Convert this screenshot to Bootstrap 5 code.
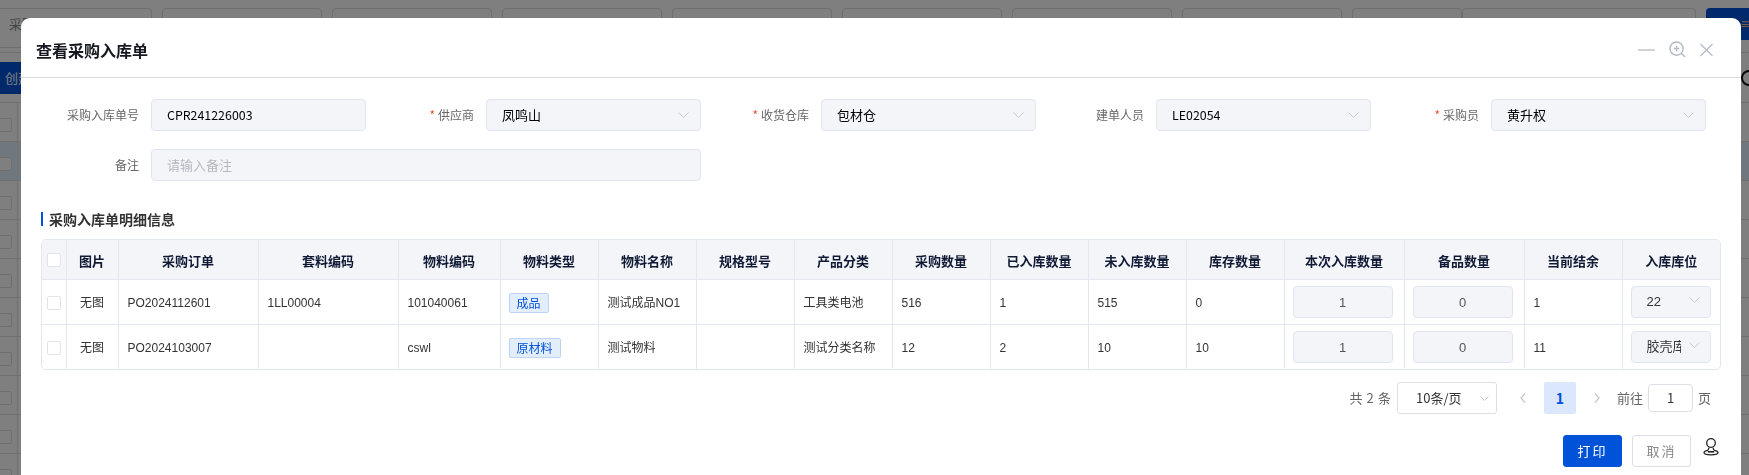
<!DOCTYPE html>
<html lang="zh-CN">
<head>
<meta charset="utf-8">
<title>查看采购入库单</title>
<link href="https://cdn.jsdelivr.net/npm/bootstrap@5.3.0/dist/css/bootstrap.min.css" rel="stylesheet">
<style>
html,body{height:475px;overflow:hidden;background:#fff;font-family:"Liberation Sans","Noto Sans CJK SC",sans-serif;font-size:12px;color:#333}
/* page behind the dialog */
.pg-top{height:40px;border-bottom:1px solid #e0e0e0;padding-top:8px;gap:10px;margin-left:-8px;width:1757px}
.pg-filter{flex:0 0 160px;height:40px;border:1px solid #dcdcdc;border-radius:4px;padding:5px 16px;font-size:13px;color:#888;background:#fff;font-family:"Noto Sans CJK SC",sans-serif;white-space:nowrap;overflow:hidden}
.pg-filter-a{flex:0 0 110px}
.pg-filter-b{flex:0 0 234px;margin-left:-10px}
.pg-blue{flex:1 1 auto;height:32px;background:#0052d9;border-radius:4px 0 0 0;color:#ffb37a;text-align:right;font-size:14px;padding-top:6px}
.pg-band{height:13px;border-bottom:1px solid #e0e0e0}
.pg-tools{height:32px;margin:9px 0 8px}
.pg-create{width:80px;background:#0052d9;color:#fff;font-size:13px;line-height:32px;padding-left:5px;font-family:"Noto Sans CJK SC",sans-serif}
.pg-ring{width:16px;height:16px;border:2px solid #111;border-radius:50%;margin:8px -8px 0 0}
.pg-row{height:39px;border-top:1px solid #e0e0e0}
.pg-row-on{background:#deeeff}
.pg-cell{width:18px;border-right:1px solid #e0e0e0;height:100%}
.pg-stub{width:14px;height:14px;margin:15px 0 0 -2px;border:1px solid #dcdcdc;border-radius:2px;background:#fff}
/* dialog */
.dlg{overflow:hidden}
.dlg .modal-dialog{margin:18px 0 0 21px;width:1720px;max-width:none;pointer-events:auto}
.dlg .modal-content{border:0;border-radius:9px 9px 0 0;height:500px;font-family:"Noto Sans CJK SC",sans-serif}
.dlg .modal-header{height:60px;padding:20px 28px 15px 15px;border-bottom:1px solid #dcdee3;border-radius:0}
.dlg-title{font-size:16px;line-height:24px;font-weight:700;color:#15181f;margin:0}
.dlg-tools{gap:14px;margin-top:-1px}
.dlg .modal-body{padding:21px 20px 0;flex:none}
.form-area{display:grid;grid-template-columns:repeat(5,335px);row-gap:18px;margin-left:-10px}
.fld-two{grid-column:span 2}
.fld-label{flex:0 0 120px;text-align:right;padding-right:12px;color:#666;font-size:12px;line-height:32px;white-space:nowrap}
.req{color:#f0542f;margin-right:3px}
.fld-box{flex:1 1 auto;height:32px;background:#f3f5f9;border:1px solid #e1e5ef;border-radius:4px;padding:0 11px 0 15px;font-size:13px;line-height:30px;color:#000;min-width:0}
.fld-mono{font-size:12.4px}
.fld-hold{color:#b5b8bf}
.sec-title{margin:31px 0 13px;height:14px;border-left:2px solid #0052d9;padding-left:6px;font-size:14px;line-height:14px;font-weight:700;color:#333}
.tbl-wrap{border:1px solid #e3e8f0;border-radius:5px;overflow:hidden;width:1680px}
.dlg .tbl{table-layout:fixed;width:1678px;margin:0;border-collapse:collapse;font-family:"Liberation Sans","Noto Sans CJK SC",sans-serif;font-size:12px}
.tbl th,.tbl td{border:0;border-left:1px solid #e3e8f0;border-top:1px solid #e3e8f0;padding:2px 9px 0;vertical-align:middle;color:#333;box-shadow:none}
.tbl tr>*:first-child{border-left:0}
.tbl thead th{height:39px;border-top:0;background:#f3f5f9;font-family:"Noto Sans CJK SC",sans-serif;font-size:13px;font-weight:700;color:#101a35;text-align:center;padding:2px 0 0}
.tbl tbody td{height:45px}
.tbl .cell-mid{text-align:center;padding:2px 0 0}
.tbl .cell-ctl{padding:0 8px}
.cb{display:block;width:14px;height:14px;margin:0 auto;border:1px solid #e0e3ea;border-radius:2px;background:#fff}
.mat-tag{display:inline-block;height:20px;line-height:18px;padding:0 7px;margin-left:-1px;font-size:12px;color:#0052d9;background:#e3eefd;border:1px solid #bdd4f7;border-radius:2px;font-family:"Noto Sans CJK SC",sans-serif;vertical-align:middle}
.num-box{width:100px;height:32px;background:#f3f5f9;border:1px solid #e1e5ef;border-radius:4px;text-align:center;line-height:32px;font-size:13px;color:#555}
.sel-box{width:80px;height:32px;background:#f3f5f9;border:1px solid #e1e5ef;border-radius:4px;padding-left:15px;padding-right:10px;line-height:32px;font-size:13px;color:#333}
.sel-text{width:34px;overflow:hidden;white-space:nowrap;flex:none}
.sel-box svg{margin-top:-4px}
.pager{margin-top:12px;height:32px;padding-right:10px;font-size:13px;color:#666;font-family:"Noto Sans CJK SC",sans-serif}
.pager-total{word-spacing:1.25px}
.pager-size{width:100px;flex:none;height:32px;margin:0 10px 0 6px;padding:0 7px 0 18px;background:#fff;border:1px solid #dcdfe6;border-radius:3px;color:#333}
.pager-nav{gap:6px;margin:0 4px 0 0;--bs-pagination-border-width:0}
.pager-nav .page-link{width:32px;height:32px;padding:0;border:0;background:transparent;display:flex;align-items:center;justify-content:center}
.pager-nav .active .page-link{background:#dbe7fd;color:#0052d9;font-weight:700;font-size:14px;border-radius:2px}
.pager-jump{width:45px;flex:none;height:28px;margin:0 5px;background:#fff;border:1px solid #dcdfe6;border-radius:4px;text-align:center;line-height:26px;color:#333}
.dlg-foot{margin-top:21px;padding-right:2px;gap:10px}
.act{height:32px;width:59px;padding:0;font-size:13px;letter-spacing:2px;border-radius:3px}
.act-main{background:#0052d9;border:1px solid #0052d9;color:#fff}
.act-plain{background:#fff;border:1px solid #dcdfe6;color:#888}
.pin-ico{margin:3px 0 0 2px}
</style>
</head>
<body>
<div class="d-flex pg-top">
  <div class="pg-filter">采购入库单号</div>
  <div class="pg-filter"></div><div class="pg-filter"></div><div class="pg-filter"></div><div class="pg-filter"></div>
  <div class="pg-filter"></div><div class="pg-filter"></div><div class="pg-filter"></div>
  <div class="pg-filter pg-filter-a"></div><div class="pg-filter pg-filter-b"></div>
  <div class="pg-blue">≡</div>
</div>
<div class="pg-band"></div>
<div class="d-flex justify-content-between pg-tools">
  <div class="pg-create">创建</div>
  <div class="pg-ring"></div>
</div>
<div class="pg-row d-flex"><div class="pg-cell"><div class="pg-stub"></div></div></div>
<div class="pg-row pg-row-on d-flex"><div class="pg-cell"><div class="pg-stub"></div></div></div>
<div class="pg-row d-flex"><div class="pg-cell"><div class="pg-stub"></div></div></div>
<div class="pg-row d-flex"><div class="pg-cell"><div class="pg-stub"></div></div></div>
<div class="pg-row d-flex"><div class="pg-cell"><div class="pg-stub"></div></div></div>
<div class="pg-row d-flex"><div class="pg-cell"><div class="pg-stub"></div></div></div>
<div class="pg-row d-flex"><div class="pg-cell"><div class="pg-stub"></div></div></div>
<div class="pg-row d-flex"><div class="pg-cell"><div class="pg-stub"></div></div></div>
<div class="pg-row d-flex"><div class="pg-cell"><div class="pg-stub"></div></div></div>
<div class="pg-row d-flex"><div class="pg-cell"><div class="pg-stub"></div></div></div>

<div class="modal-backdrop show"></div>
<div class="modal d-block dlg">
 <div class="modal-dialog">
  <div class="modal-content">
   <div class="modal-header align-items-center justify-content-between">
     <h5 class="dlg-title">查看采购入库单</h5>
     <div class="d-flex align-items-center dlg-tools">
       <svg width="17" height="18" viewBox="0 0 17 18" fill="none" stroke="#bcc1cb" stroke-width="1.4"><path d="M0 9h17"/></svg>
       <svg width="17" height="17" viewBox="0 0 18 18" fill="none" stroke="#b4b9c4" stroke-width="1.5"><circle cx="8" cy="8" r="7"/><path d="M13 13l4 4M8 5v6M5 8h6"/></svg>
       <svg width="13" height="14" viewBox="0 0 13 14" fill="none" stroke="#b4b9c4" stroke-width="1.2"><path d="M.5 1l12 12M12.500 1l-12 12"/></svg>
     </div>
   </div>
   <div class="modal-body">
     <div class="form-area">
       <div class="d-flex"><div class="fld-label">采购入库单号</div><div class="fld-box fld-mono">CPR241226003</div></div>
       <div class="d-flex"><div class="fld-label"><span class="req">*</span>供应商</div><div class="fld-box d-flex justify-content-between align-items-center"><span>凤鸣山</span><svg width="11" height="6" viewBox="0 0 11 6" fill="none" stroke="#c4c9d2"><path d="M.5.5l5 5 5-5"/></svg></div></div>
       <div class="d-flex"><div class="fld-label"><span class="req">*</span>收货仓库</div><div class="fld-box d-flex justify-content-between align-items-center"><span>包材仓</span><svg width="11" height="6" viewBox="0 0 11 6" fill="none" stroke="#c4c9d2"><path d="M.5.5l5 5 5-5"/></svg></div></div>
       <div class="d-flex"><div class="fld-label">建单人员</div><div class="fld-box fld-mono d-flex justify-content-between align-items-center"><span>LE02054</span><svg width="11" height="6" viewBox="0 0 11 6" fill="none" stroke="#c4c9d2"><path d="M.5.5l5 5 5-5"/></svg></div></div>
       <div class="d-flex"><div class="fld-label"><span class="req">*</span>采购员</div><div class="fld-box d-flex justify-content-between align-items-center"><span>黄升权</span><svg width="11" height="6" viewBox="0 0 11 6" fill="none" stroke="#c4c9d2"><path d="M.5.5l5 5 5-5"/></svg></div></div>
       <div class="d-flex fld-two"><div class="fld-label">备注</div><div class="fld-box fld-hold">请输入备注</div></div>
     </div>
     <div class="sec-title">采购入库单明细信息</div>
     <div class="tbl-wrap">
       <table class="table tbl">
         <colgroup>
           <col style="width:24px"><col style="width:52px"><col style="width:140px"><col style="width:140px"><col style="width:102px"><col style="width:98px"><col style="width:98px"><col style="width:98px"><col style="width:98px"><col style="width:98px"><col style="width:98px"><col style="width:98px"><col style="width:98px"><col style="width:120px"><col style="width:120px"><col style="width:98px"><col style="width:98px">
         </colgroup>
         <thead><tr>
           <th><span class="cb"></span></th><th>图片</th><th>采购订单</th><th>套料编码</th><th>物料编码</th><th>物料类型</th><th>物料名称</th><th>规格型号</th><th>产品分类</th><th>采购数量</th><th>已入库数量</th><th>未入库数量</th><th>库存数量</th><th>本次入库数量</th><th>备品数量</th><th>当前结余</th><th>入库库位</th>
         </tr></thead>
         <tbody>
           <tr>
             <td class="cell-mid"><span class="cb"></span></td><td class="cell-mid">无图</td><td>PO2024112601</td><td>1LL00004</td><td>101040061</td><td><span class="mat-tag">成品</span></td><td>测试成品NO1</td><td></td><td>工具类电池</td><td>516</td><td>1</td><td>515</td><td>0</td>
             <td class="cell-ctl"><div class="num-box">1</div></td><td class="cell-ctl"><div class="num-box">0</div></td><td>1</td>
             <td class="cell-ctl"><div class="sel-box d-flex justify-content-between align-items-center"><span class="sel-text">22</span><svg width="11" height="6" viewBox="0 0 11 6" fill="none" stroke="#c4c9d2"><path d="M.5.5l5 5 5-5"/></svg></div></td>
           </tr>
           <tr>
             <td class="cell-mid"><span class="cb"></span></td><td class="cell-mid">无图</td><td>PO2024103007</td><td></td><td>cswl</td><td><span class="mat-tag">原材料</span></td><td>测试物料</td><td></td><td>测试分类名称</td><td>12</td><td>2</td><td>10</td><td>10</td>
             <td class="cell-ctl"><div class="num-box">1</div></td><td class="cell-ctl"><div class="num-box">0</div></td><td>11</td>
             <td class="cell-ctl"><div class="sel-box d-flex justify-content-between align-items-center"><span class="sel-text">胶壳库</span><svg width="11" height="6" viewBox="0 0 11 6" fill="none" stroke="#c4c9d2"><path d="M.5.5l5 5 5-5"/></svg></div></td>
           </tr>
         </tbody>
       </table>
     </div>
     <div class="d-flex justify-content-end align-items-center pager">
       <span class="pager-total">共 2 条</span>
       <div class="pager-size d-flex justify-content-between align-items-center"><span>10条/页</span><svg width="9" height="5" viewBox="0 0 9 5" fill="none" stroke="#c4c9d2"><path d="M.5.500l4 4 4-4"/></svg></div>
       <ul class="pagination pager-nav">
         <li class="page-item"><a class="page-link" href="#"><svg width="6" height="10" viewBox="0 0 6 10" fill="none" stroke="#c4c9d2" stroke-width="1.3"><path d="M5 .5L1 5l4 4.500"/></svg></a></li>
         <li class="page-item active"><a class="page-link" href="#">1</a></li>
         <li class="page-item"><a class="page-link" href="#"><svg width="6" height="10" viewBox="0 0 6 10" fill="none" stroke="#c4c9d2" stroke-width="1.3"><path d="M1 .5L5 5 1 9.500"/></svg></a></li>
       </ul>
       <span>前往</span><div class="pager-jump">1</div><span>页</span>
     </div>
     <div class="d-flex justify-content-end dlg-foot">
       <button type="button" class="btn act act-main">打印</button>
       <button type="button" class="btn act act-plain">取消</button>
       <svg class="pin-ico" width="16" height="18" viewBox="0 0 16 18" fill="none" stroke="#222" stroke-width="1.3"><circle cx="8" cy="5" r="4.300"/><path d="M6 9.500C5.800 11 5.500 12 4.500 12.300 2.300 12.800 1 13.500 1 14.500 1 16 4 16.800 8 16.800s7-.8 7-2.300c0-1-1.300-1.700-3.500-2.200C10.500 12 10.200 11 10 9.500"/><path d="M4.800 13.800h6.400" stroke-width="1.600"/></svg>
     </div>
   </div>
  </div>
 </div>
</div>
</body>
</html>
